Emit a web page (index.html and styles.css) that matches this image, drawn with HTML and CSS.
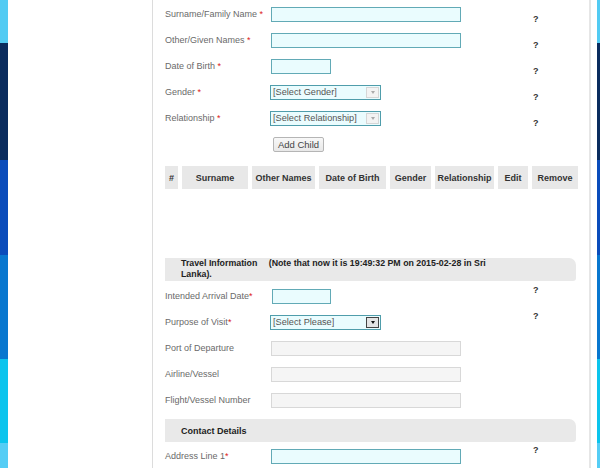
FILE: index.html
```html
<!DOCTYPE html>
<html lang="en">
<head>
<meta charset="utf-8">
<title>Visa Application - Children</title>
<link rel="stylesheet" href="styles.css">
</head>
<body>
<div class="page">
  <div class="stripe"></div>
  <div class="gutter"></div>
  <main class="panel">
    <div class="row">
      <label class="label">Surname/Family Name <span class="req">*</span></label>
      <div class="field"><input class="input wide" type="text"></div>
      <span class="help help-low">?</span>
    </div>
    <div class="row">
      <label class="label">Other/Given Names <span class="req">*</span></label>
      <div class="field"><input class="input wide" type="text"></div>
      <span class="help help-low">?</span>
    </div>
    <div class="row">
      <label class="label">Date of Birth <span class="req">*</span></label>
      <div class="field"><input class="input short" type="text"></div>
      <span class="help help-low">?</span>
    </div>
    <div class="row">
      <label class="label">Gender <span class="req">*</span></label>
      <div class="field"><div class="select"><span class="select-text">[Select Gender]</span><span class="select-arrow"></span></div></div>
      <span class="help help-low">?</span>
    </div>
    <div class="row">
      <label class="label">Relationship <span class="req">*</span></label>
      <div class="field"><div class="select"><span class="select-text">[Select Relationship]</span><span class="select-arrow"></span></div></div>
      <span class="help help-low">?</span>
    </div>
    <div class="row">
      <span class="label"></span>
      <div class="field"><button class="btn" type="button">Add Child</button></div>
    </div>

    <table class="children">
      <colgroup>
        <col class="c-num"><col class="c-sur"><col class="c-oth"><col class="c-dob"><col class="c-gen"><col class="c-rel"><col class="c-edit"><col class="c-rem">
      </colgroup>
      <thead>
        <tr><th>#</th><th>Surname</th><th>Other Names</th><th>Date of Birth</th><th>Gender</th><th>Relationship</th><th>Edit</th><th>Remove</th></tr>
      </thead>
    </table>

    <div class="bar bar-travel">
      <span class="bar-text"><span class="bar-title">Travel Information</span> <span class="bar-note">(Note that now it is 19:49:32 PM on 2015-02-28 in Sri</span><br><span class="bar-note">Lanka).</span></span>
    </div>
    <div class="rows-travel">
      <div class="row">
        <label class="label">Intended Arrival Date<span class="req">*</span></label>
        <div class="field"><input class="input arrival" type="text"></div>
        <span class="help help-high">?</span>
      </div>
      <div class="row">
        <label class="label">Purpose of Visit<span class="req">*</span></label>
        <div class="field"><div class="select"><span class="select-text">[Select Please]</span><span class="select-arrow dark"></span></div></div>
        <span class="help help-high">?</span>
      </div>
      <div class="row">
        <label class="label">Port of Departure</label>
        <div class="field"><input class="input wide disabled" type="text" disabled></div>
      </div>
      <div class="row">
        <label class="label">Airline/Vessel</label>
        <div class="field"><input class="input wide disabled" type="text" disabled></div>
      </div>
      <div class="row">
        <label class="label">Flight/Vessel Number</label>
        <div class="field"><input class="input wide disabled" type="text" disabled></div>
      </div>
    </div>

    <div class="bar bar-contact">
      <span class="bar-title">Contact Details</span>
    </div>
    <div class="rows-contact">
      <div class="row">
        <label class="label">Address Line 1<span class="req">*</span></label>
        <div class="field"><input class="input wide" type="text"></div>
        <span class="help help-high">?</span>
      </div>
    </div>
  </main>
  <div class="gutter-r"></div>
  <div class="stripe stripe-r"></div>
</div>
</body>
</html>
```
FILE: styles.css
```css
* { box-sizing: border-box; }
html, body { margin: 0; padding: 0; background: #fff; }
body {
  font-family: "Liberation Sans", Arial, sans-serif;
  font-size: 9px;
  color: #666;
  overflow: hidden;
}
.page {
  display: flex;
  width: 600px;
  height: 468px;
  overflow: hidden;
}
.stripe {
  width: 8px;
  flex: none;
  background: linear-gradient(to bottom,
    #52cbf3 0, #52cbf3 43px,
    #0a2c5e 43px, #0a2c5e 160px,
    #0a4cbb 160px, #0a4cbb 255px,
    #0877cf 255px, #0877cf 359px,
    #0bc4ed 359px, #0bc4ed 443px,
    #55cdf5 443px, #55cdf5 100%);
}
.stripe-r { width: 3px; }
.gutter { width: 144px; flex: none; }
.gutter-r { width: 6px; flex: none; }
.panel {
  width: 439px;
  flex: none;
  border-left: 1px solid #dcdcdc;
  border-right: 2px solid #e6e6e6;
  padding: 1px 13px 0 12px;
}
.row {
  display: grid;
  grid-template-columns: 106px 262px 1fr;
  height: 26px;
  align-items: center;
}
.label { color: #6a6a6a; white-space: nowrap; }
.req { color: #d22; }
.field { display: flex; align-items: center; }
.input {
  height: 15px;
  border: 1px solid #62aab6;
  background: #eafcfe;
  margin: 0;
  padding: 0 2px;
  font: inherit;
  outline: none;
}
.input.wide { width: 190px; }
.input.short { width: 60px; }
.input.arrival { width: 59px; margin-left: 1px; }
.input.disabled { background: #f5f5f5; border-color: #d8d8d8; }
.select {
  display: flex;
  width: 111px;
  height: 15px;
  margin-left: -1px;
  border: 1px solid #4f9dab;
  background: #eafcfe;
}
.select-text {
  flex: 1;
  padding-left: 2px;
  line-height: 13px;
  color: #555;
  font-size: 9.2px;
  white-space: nowrap;
  overflow: hidden;
}
.select-arrow {
  width: 13px;
  margin: 1px 1px 1px 0;
  background: #f3f3f3;
  border: 1px solid #d6d6d6;
  display: flex;
  align-items: center;
  justify-content: center;
}
.select-arrow::after {
  content: "";
  border-left: 2.5px solid transparent;
  border-right: 2.5px solid transparent;
  border-top: 3px solid #aaa;
}
.select-arrow.dark { background: #e4e4e4; border-color: #444; }
.select-arrow.dark::after { border-top-color: #111; }
.help {
  font-weight: bold;
  color: #333;
  line-height: 10px;
  padding-left: 0;
}
.help-low { align-self: end; margin-bottom: 3px; }
.help-high { align-self: start; margin-top: 2px; }
.btn {
  margin-left: 2px;
  width: 51px;
  height: 15px;
  padding: 0;
  border: 1px solid #b5b5b5;
  border-radius: 2px;
  background: linear-gradient(#f8f8f8, #e8e8e8);
  color: #444;
  font-family: inherit;
  font-size: 9.5px;
  line-height: 13px;
}
.children {
  margin: 9px 0 0 -4px;
  border-collapse: separate;
  border-spacing: 4px 0;
  table-layout: fixed;
  width: 421px;
}
.children th {
  height: 23px;
  padding: 0;
  background: #e8e8e8;
  color: #333;
  font-weight: bold;
  font-size: 9px;
  text-align: center;
  white-space: nowrap;
}
.c-num { width: 13px; }
.c-sur { width: 66px; }
.c-oth { width: 63px; }
.c-dob { width: 67px; }
.c-gen { width: 41px; }
.c-rel { width: 59px; }
.c-edit { width: 30px; }
.c-rem { width: 46px; }
.bar {
  background: #e9e9e9;
  height: 23px;
  border-radius: 0 7px 3px 0;
  padding-left: 16px;
  color: #222;
  font-weight: bold;
}
.bar-travel { margin-top: 69px; padding-top: 0; }
.bar-text { display: block; width: 340px; line-height: 10.5px; font-size: 8.8px; }
.bar-title { margin-right: 9px; }
.bar-note { white-space: nowrap; }
.bar-contact { margin-top: 6px; display: flex; align-items: center; }
.rows-travel { margin-top: 2px; }
.rows-contact { margin-top: 1px; }
```
